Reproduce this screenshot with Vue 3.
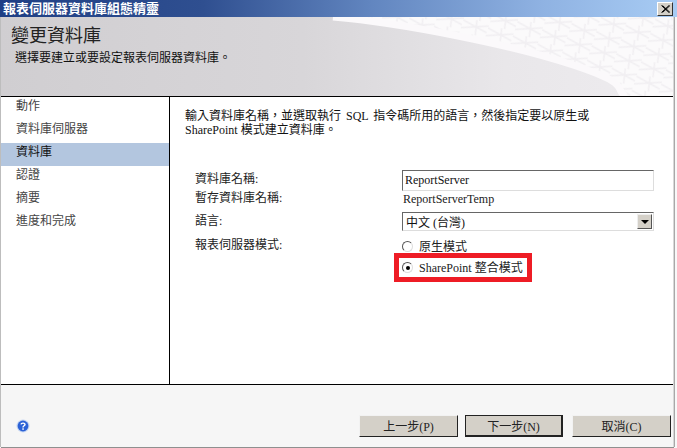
<template>
  <div class="win">
    <div class="titlebar">
      <span class="title-text">報表伺服器資料庫組態精靈</span>
      <button class="close" type="button" aria-label="關閉">
        <svg width="9" height="8" viewBox="0 0 9 8"><path d="M0.5 0.5L8 7.5M1.5 0.5L9 7.5M8 0.5L0.5 7.5M9 0.5L1.5 7.5" stroke="#000" stroke-width="1" fill="none"/></svg>
      </button>
    </div>
    <div class="frame">
      <header class="head">
        <svg class="head-art" width="400" height="79" viewBox="0 0 400 79" preserveAspectRatio="none">
          <defs>
            <pattern id="mesh" width="26" height="15" patternUnits="userSpaceOnUse" patternTransform="rotate(18)">
              <rect width="26" height="15" fill="#fbfafb"/>
              <path d="M0 4L26 9M0 12L26 2M13 0L16 15" stroke="#f1eff2" stroke-width="1.5" fill="none"/>
            </pattern>
          </defs>
          <path d="M60 0C130 6 240 28 300 48S340 70 352 79H400V0Z" fill="url(#mesh)"/>
          <path d="M60 0C130 6 240 28 300 48S340 70 352 79" fill="none" stroke="#fbf9fb" stroke-width="7"/>
        </svg>
        <h1 class="head-title">變更資料庫</h1>
        <p class="head-sub">選擇要建立或要設定報表伺服器資料庫。</p>
      </header>
      <div class="middle">
        <nav class="side">
          <div v-for="s in steps" :key="s" class="step" :class="{ on: s === '資料庫' }">{{ s }}</div>
        </nav>
        <main class="content">
          <p class="intro"><span class="line1">輸入資料庫名稱&#xFF0C;並選取執行 SQL 指令碼所用的語言&#xFF0C;然後指定要以原生或</span><br>SharePoint 模式建立資料庫。</p>
          <div class="form">
            <label class="lab r1">資料庫名稱:</label>
            <div class="field r1"><div class="sunken text">ReportServer</div></div>
            <label class="lab r2">暫存資料庫名稱:</label>
            <div class="field r2 plain">ReportServerTemp</div>
            <label class="lab r3">語言:</label>
            <div class="field r3">
              <div class="sunken combo">
                <span>中文 (台灣)</span>
                <span class="arrow"><i></i></span>
              </div>
            </div>
            <label class="lab r4">報表伺服器模式:</label>
            <div class="field r4 radios">
              <div class="radio"><span class="dot"></span>原生模式</div>
              <div class="radio sel"><span class="dot"><i></i></span>SharePoint 整合模式<span class="redbox"></span></div>
            </div>
          </div>
        </main>
      </div>
      <footer class="foot">
        <svg class="help" width="14" height="14" viewBox="0 0 14 14">
          <circle cx="7" cy="7" r="6.5" fill="#c5d6f2"/>
          <circle cx="7" cy="7" r="5.4" fill="#2c62d6"/>
          <path d="M5 5.3C5.2 3.8 8.9 3.6 9 5.4C9 6.8 7 6.7 7 8.4" fill="none" stroke="#fff" stroke-width="1.4"/>
          <rect x="6.3" y="9.3" width="1.5" height="1.5" fill="#fff"/>
        </svg>
        <div class="btns">
          <button class="btn" type="button">上一步(P)</button>
          <button class="btn def" type="button">下一步(N)</button>
          <button class="btn" type="button">取消(C)</button>
        </div>
      </footer>
    </div>
  </div>
</template>

<script setup>
const steps = ['動作', '資料庫伺服器', '資料庫', '認證', '摘要', '進度和完成']
</script>

<style>
html, body { margin: 0; background: #fff; }
</style>

<style scoped>
.win {
  width: 677px;
  height: 448px;
  overflow: hidden;
  display: flex;
  flex-direction: column;
  font-family: "Liberation Serif", "Noto Sans CJK TC", serif;
  font-size: 12px;
  color: #111;
  background: #f8f8f8;
}
.titlebar {
  height: 17px;
  flex: none;
  display: flex;
  align-items: center;
  justify-content: space-between;
  padding: 0 4px 0 3px;
  background: linear-gradient(90deg, #1f3f85 0%, #2f4f90 30%, #6286c0 55%, #8fb2e2 80%, #a8ccf4 100%);
}
.title-text { color: #fff; font-weight: 700; font-size: 13px; line-height: 17px; }
.close {
  width: 16px;
  height: 14px;
  padding: 0;
  margin-top: 1px;
  display: flex;
  align-items: center;
  justify-content: center;
  background: #d4d0c8;
  border: 1px solid;
  border-color: #fff #333 #333 #fff;
}
.frame {
  flex: 1;
  min-height: 0;
  display: flex;
  flex-direction: column;
  margin: 0 3px 1px 1px;
  box-shadow: -1px 0 0 #bdbdbd, 1px 0 0 #a8a8a8, 0 1px 0 #8f8f8f;
  border-right: 1px solid #d8d8d8;
  position: relative;
}
.head {
  height: 79px;
  flex: none;
  box-sizing: border-box;
  padding: 8px 0 0 10px;
  position: relative;
  overflow: hidden;
  background: linear-gradient(90deg, #d0ced1 0%, #d8d6d9 45%, #e9e7ea 75%, #eeecef 100%);
}
.head-art { position: absolute; right: 0; top: 0; }
.head-title {
  position: relative;
  margin: 0;
  font-size: 18px;
  font-weight: 400;
  line-height: 22px;
  color: #222;
}
.head-sub { position: relative; margin: 3px 0 0 4px; font-size: 12px; line-height: 16px; color: #111; }
.middle {
  flex: 1;
  min-height: 0;
  display: flex;
  background: #fff;
  border-top: 1px solid #000;
  border-bottom: 1px solid #000;
}
.side {
  width: 168px;
  flex: none;
  border-right: 1px solid #000;
}
.step {
  height: 23px;
  box-sizing: border-box;
  padding: 1px 0 0 15px;
  line-height: 17px;
  color: #444;
}
.step.on { background: #b3c6df; color: #111; }
.content { flex: 1; min-width: 0; padding: 12px 0 0 15px; }
.intro { margin: 0; line-height: 14px; color: #111; }
.line1 { word-spacing: 2px; }
.form {
  position: relative;
  display: grid;
  grid-template-columns: 207px 252px;
  grid-template-rows: 21px 19px 21px 46px;
  margin: 33px 0 0 10px;
  row-gap: 1px;
}
.lab { grid-column: 1; line-height: 16px; color: #222; }
.field { grid-column: 2; }
.r1 { grid-row: 1; }
.r2 { grid-row: 2; }
.r3 { grid-row: 3; }
.r4 { grid-row: 4; }
.lab.r1 { padding-top: 1px; }
.lab.r2 { line-height: 12px; }
.lab.r3 { padding-top: 1px; }
.lab.r4 { padding-top: 3px; }
.sunken {
  box-sizing: border-box;
  border: 1px solid;
  border-color: #666 #ddd #ddd #666;
  background: #fff;
}
.text { height: 21px; line-height: 18px; padding-left: 2px; }
.plain { line-height: 14px; padding-left: 1px; color: #222; }
.combo {
  height: 19px;
  display: flex;
  justify-content: space-between;
  align-items: center;
  padding: 0 1px 0 3px;
}
.arrow {
  width: 15px;
  height: 15px;
  display: flex;
  align-items: center;
  justify-content: center;
  box-sizing: border-box;
  background: #d4d0c8;
  border: 1px solid;
  border-color: #eee #555 #555 #eee;
}
.arrow i {
  width: 0;
  height: 0;
  border: 4px solid transparent;
  border-top: 4px solid #000;
  border-bottom: 0;
}
.radios { padding-top: 2px; }
.radio {
  position: relative;
  height: 21px;
  display: flex;
  align-items: center;
  gap: 6px;
  line-height: 16px;
  color: #222;
}
.dot {
  width: 11px;
  height: 11px;
  flex: none;
  box-sizing: border-box;
  border-radius: 50%;
  background: #fff;
  border: 1px solid;
  border-color: #555 #ddd #ddd #555;
  display: flex;
  align-items: center;
  justify-content: center;
}
.dot i { width: 4px; height: 4px; border-radius: 50%; background: #000; }
.redbox {
  position: absolute;
  left: -8px;
  top: -4px;
  width: 138px;
  height: 29px;
  box-sizing: border-box;
  border: 5px solid #ee1c25;
}
.foot {
  height: 62px;
  flex: none;
  display: flex;
  justify-content: space-between;
  align-items: flex-end;
  box-sizing: border-box;
  padding: 0 2px 10px 15px;
  background: #f6f6f6;
}
.help { margin-bottom: 4px; }
.btns { display: flex; gap: 7px; }
.btn {
  width: 99px;
  height: 22px;
  padding: 0;
  font: inherit;
  color: #222;
  background: #d4d0c8;
  border: 1px solid;
  border-color: #f2f2f2 #222 #222 #f2f2f2;
  box-sizing: border-box;
}
.btn.def { width: 98px; margin-right: 2px; border-color: #222; border-width: 1px 2px 2px 1px; }
</style>
